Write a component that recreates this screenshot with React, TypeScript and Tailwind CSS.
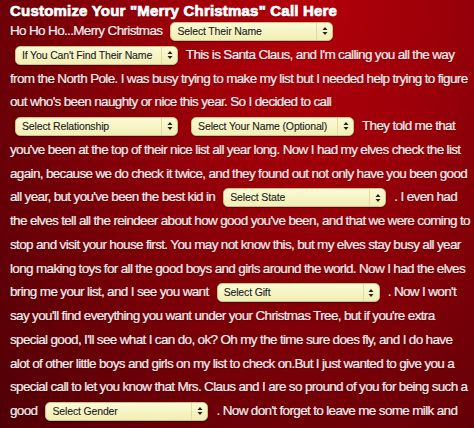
import type { ReactNode } from 'react';

const textFont = "font-['Liberation_Sans',Arial,sans-serif]";

function Picker({ label }: { label: string }) {
  return (
    <span className="mx-[5px] inline-flex h-[19px] w-[163px] items-center justify-between rounded-[5px] border border-[#c9c28a] bg-[linear-gradient(#fbfad6,#f1eeb4)] align-middle text-[10.5px] leading-none tracking-[-0.15px] text-[#1c1c1c] shadow-[0_1px_1px_rgba(0,0,0,0.35)] [text-shadow:none] [-webkit-text-stroke:0.1px_#1c1c1c]">
      <span className="pl-[6px]">{label}</span>
      <span className="flex h-full w-[16px] items-center justify-center border-l border-[#e2dca0]">
        <svg width="6" height="10" viewBox="0 0 6 10" aria-hidden>
          <path d="M3 1 L5.5 4 H0.5 Z M3 9 L0.5 6 H5.5 Z" fill="#222" />
        </svg>
      </span>
    </span>
  );
}

function Line({ children }: { children: ReactNode }) {
  return <div className="h-[23.75px] whitespace-nowrap leading-[23.75px]">{children}</div>;
}

export default function App() {
  return (
    <div
      className={`h-[428px] w-full overflow-hidden bg-[radial-gradient(ellipse_at_65%_0%,#b3000b_0%,#9c0009_30%,#730008_65%,#4e0006_100%)] px-[10px] text-[#f7eeee] ${textFont}`}
    >
      <h1 className="h-[19px] pt-[3px] text-[15px] font-black leading-[16px] tracking-[0.2px] text-white [-webkit-text-stroke:0.7px_white] [text-shadow:0_1px_1px_rgba(0,0,0,0.3)]">
        Customize Your "Merry Christmas" Call Here
      </h1>
      <div className="text-[13.5px] tracking-[-0.66px] [text-shadow:0_1px_1px_rgba(0,0,0,0.25)] [-webkit-text-stroke:0.2px_#f7eeee]">
        <Line>
          Ho Ho Ho...Merry Christmas <Picker label="Select Their Name" />
        </Line>
        <Line>
          <Picker label="If You Can't Find Their Name" /> This is Santa Claus, and I'm calling you all the way
        </Line>
        <Line>from the North Pole. I was busy trying to make my list but I needed help trying to figure</Line>
        <Line>out who's been naughty or nice this year. So I decided to call</Line>
        <Line>
          <Picker label="Select Relationship" /> <Picker label="Select Your Name (Optional)" /> They told me that
        </Line>
        <Line>you've been at the top of their nice list all year long. Now I had my elves check the list</Line>
        <Line>again, because we do check it twice, and they found out not only have you been good</Line>
        <Line>
          all year, but you've been the best kid in <Picker label="Select State" /> . I even had
        </Line>
        <Line>the elves tell all the reindeer about how good you've been, and that we were coming to</Line>
        <Line>stop and visit your house first. You may not know this, but my elves stay busy all year</Line>
        <Line>long making toys for all the good boys and girls around the world. Now I had the elves</Line>
        <Line>
          bring me your list, and I see you want <Picker label="Select Gift" /> . Now I won't
        </Line>
        <Line>say you'll find everything you want under your Christmas Tree, but if you're extra</Line>
        <Line>special good, I'll see what I can do, ok? Oh my the time sure does fly, and I do have</Line>
        <Line>alot of other little boys and girls on my list to check on.But I just wanted to give you a</Line>
        <Line>special call to let you know that Mrs. Claus and I are so pround of you for being such a</Line>
        <Line>
          good <Picker label="Select Gender" /> . Now don't forget to leave me some milk and
        </Line>
      </div>
    </div>
  );
}
